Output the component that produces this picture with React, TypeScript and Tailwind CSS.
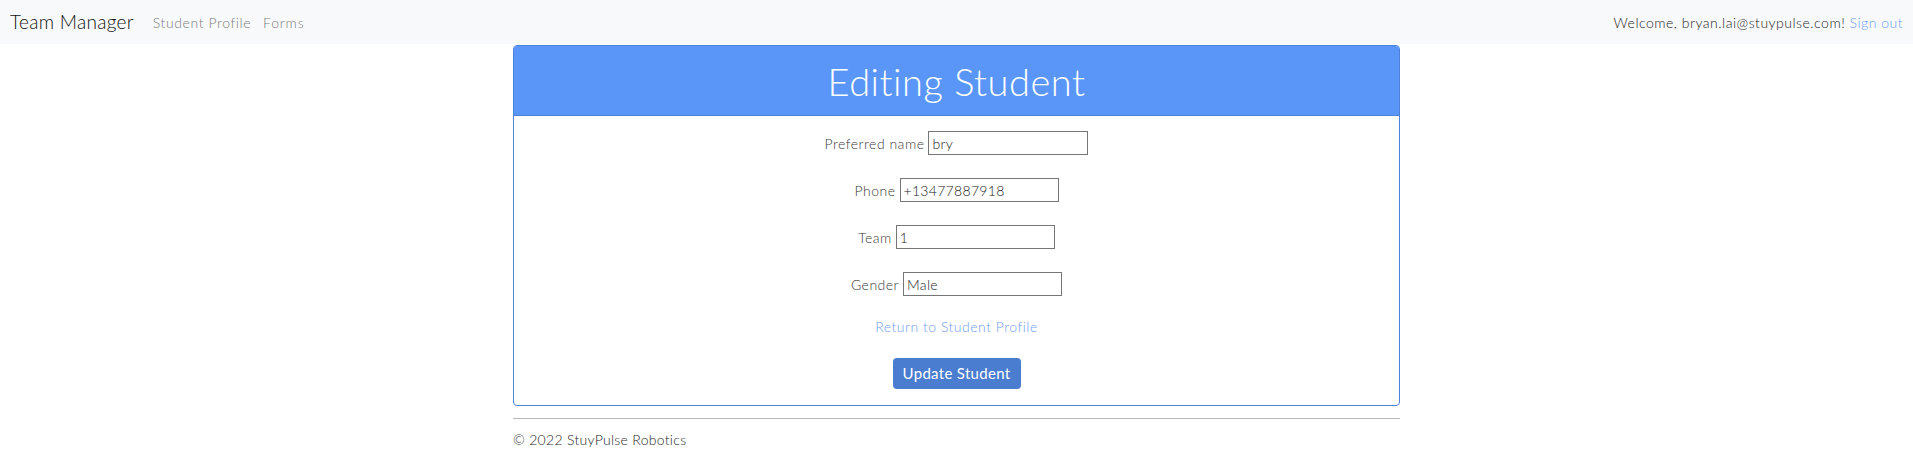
import React from "react";

const font = { fontFamily: "Lato, 'Noto Sans', sans-serif" };

function Row({ label, value, inputW }: { label: string; value: string; inputW: string }) {
  return (
    <div className="flex items-center justify-center h-[24px] gap-[4px]">
      <label className="text-[14px] text-[#3a3a3a] tracking-[0.5px] font-light">{label}</label>
      <input
        readOnly
        value={value}
        className={`h-[24px] ${inputW} border border-[#767676] px-[3px] text-[14px] text-[#1a1a1a] tracking-[0.3px] bg-white outline-none font-light`}
      />
    </div>
  );
}

export default function App() {
  return (
    <div className="w-[1913px] h-[461px] bg-white" style={font}>
      <nav className="h-[44px] bg-[#f8f9fa] flex items-center justify-between pl-[10px] pr-[10px]">
        <div className="flex items-center">
          <span className="text-[19px] text-[#111] tracking-[0.3px] font-light">Team Manager</span>
          <span className="ml-[19px] text-[14px] text-[#7d7d7d] tracking-[0.6px] font-light">Student Profile</span>
          <span className="ml-[12px] text-[14px] text-[#7d7d7d] tracking-[0.8px] font-light">Forms</span>
        </div>
        <div className="text-[14px] text-[#1f1f1f] tracking-[0.5px] font-light">
          Welcome, bryan.lai@stuypulse.com! <span className="text-[#6f9cf0]">Sign out</span>
        </div>
      </nav>
      <div className="w-[887px] mx-auto mt-[1px] border border-[#4d82da] rounded-[4px] overflow-hidden">
        <div className="h-[70px] bg-[#5a96f8] border-b border-[#4d82da] flex items-center justify-center">
          <h1 className="text-[38px] text-white leading-none font-light tracking-[0.5px]">Editing Student</h1>
        </div>
        <div className="flex flex-col items-center pt-[15px] pb-[16px]">
          <div className="flex flex-col gap-[23px] w-full">
            <Row label="Preferred name" value="bry" inputW="w-[160px]" />
            <Row label="Phone" value="+13477887918" inputW="w-[159px]" />
            <Row label="Team" value="1" inputW="w-[159px]" />
            <Row label="Gender" value="Male" inputW="w-[159px]" />
          </div>
          <a className="mt-[22px] h-[18px] leading-[18px] text-[14px] text-[#6f9cf0] tracking-[0.5px] font-light">Return to Student Profile</a>
          <button className="mt-[22px] w-[128px] h-[31px] rounded-[4px] bg-[#4a7ccf] text-white text-[15px] tracking-[0.3px]">
            Update Student
          </button>
        </div>
      </div>
      <div className="w-[887px] mx-auto mt-[12px] border-t border-[#b8b8b8]" />
      <div className="w-[887px] mx-auto mt-[10px] text-[14px] text-[#1f1f1f] tracking-[0.3px] font-light">© 2022 StuyPulse Robotics</div>
    </div>
  );
}
